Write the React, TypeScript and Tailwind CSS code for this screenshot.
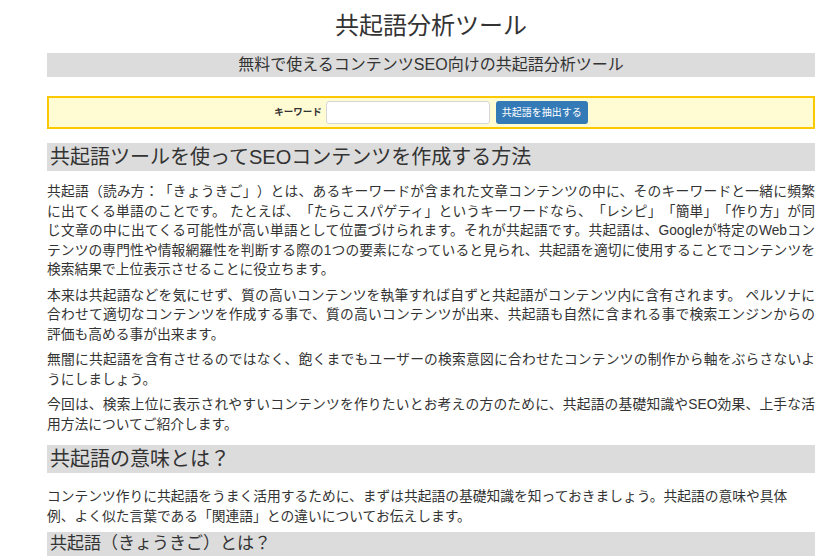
import { useState } from 'react';

const intro: string[][] = [
  [
    '共起語（読み方：「きょうきご」）とは、あるキーワードが含まれた文章コンテンツの中に、そのキーワードと一緒に頻繁',
    'に出てくる単語のことです。 たとえば、「たらこスパゲティ」というキーワードなら、「レシピ」「簡単」「作り方」が同',
    'じ文章の中に出てくる可能性が高い単語として位置づけられます。それが共起語です。共起語は、Googleが特定のWebコン',
    'テンツの専門性や情報網羅性を判断する際の1つの要素になっていると見られ、共起語を適切に使用することでコンテンツを',
    '検索結果で上位表示させることに役立ちます。',
  ],
  [
    '本来は共起語などを気にせず、質の高いコンテンツを執筆すれば自ずと共起語がコンテンツ内に含有されます。 ペルソナに',
    '合わせて適切なコンテンツを作成する事で、質の高いコンテンツが出来、共起語も自然に含まれる事で検索エンジンからの',
    '評価も高める事が出来ます。',
  ],
  [
    '無闇に共起語を含有させるのではなく、飽くまでもユーザーの検索意図に合わせたコンテンツの制作から軸をぶらさないよ',
    'うにしましょう。',
  ],
  [
    '今回は、検索上位に表示されやすいコンテンツを作りたいとお考えの方のために、共起語の基礎知識やSEO効果、上手な活',
    '用方法についてご紹介します。',
  ],
];

const meaning: string[] = [
  'コンテンツ作りに共起語をうまく活用するために、まずは共起語の基礎知識を知っておきましょう。共起語の意味や具体',
  '例、よく似た言葉である「関連語」との違いについてお伝えします。',
];

// lines are kept as in the original page so wrapping matches
function Paragraph({ lines, justify = true }: { lines: string[]; justify?: boolean }) {
  return (
    <p className="mb-[6px] text-[13.75px] leading-[19.5px] text-[#333]">
      {lines.map((line, i) =>
        justify && i < lines.length - 1 ? (
          <span key={i} className="block whitespace-nowrap text-justify [text-align-last:justify]">
            {line}
          </span>
        ) : (
          <span key={i} className="block whitespace-nowrap">
            {line}
          </span>
        )
      )}
    </p>
  );
}

export default function App() {
  const [keyword, setKeyword] = useState('');

  return (
    <div className="h-[559px] w-[840px] overflow-hidden bg-white font-['Liberation_Sans','Noto_Sans_CJK_JP',sans-serif] text-[#333] [text-spacing-trim:space-all]">
      <div className="ml-[47px] w-[768px]">
        <h1 className="pt-[12px] text-center text-[24px] leading-[28px]">共起語分析ツール</h1>

        <p className="mt-[13px] bg-[#dcdcdc] text-center text-[16px] leading-[24px]">
          無料で使えるコンテンツSEO向けの共起語分析ツール
        </p>

        <div className="mt-[19px] flex h-[33px] items-center justify-center border-2 border-[#fcc800] bg-[#fffbd3]">
          <label className="mr-[4px] text-[9.5px] font-bold">キーワード</label>
          <input
            type="text"
            value={keyword}
            onChange={(e) => setKeyword(e.target.value)}
            className="h-[23px] w-[164px] rounded-[3px] border border-[#d6d6d6] bg-white px-2 text-[11px] outline-none"
          />
          <button
            type="button"
            className="ml-[6px] h-[23px] w-[92px] rounded-[3px] bg-[#337ab7] text-[10px] text-white"
          >
            共起語を抽出する
          </button>
        </div>

        <h2 className="mt-[14px] mb-[11px] bg-[#dcdcdc] pl-[3px] text-[20px] leading-[28px]">
          共起語ツールを使ってSEOコンテンツを作成する方法
        </h2>
        {intro.map((lines, i) => (
          <Paragraph key={i} lines={lines} />
        ))}

        <h2 className="mt-[11px] mb-[14px] bg-[#dcdcdc] pl-[3px] text-[20px] leading-[28px]">
          共起語の意味とは？
        </h2>
        <Paragraph lines={meaning} justify={false} />

        <h3 className="mt-[5px] bg-[#dcdcdc] pl-[3px] text-[17px] leading-[24px]">
          共起語（きょうきご）とは？
        </h3>
      </div>
    </div>
  );
}
